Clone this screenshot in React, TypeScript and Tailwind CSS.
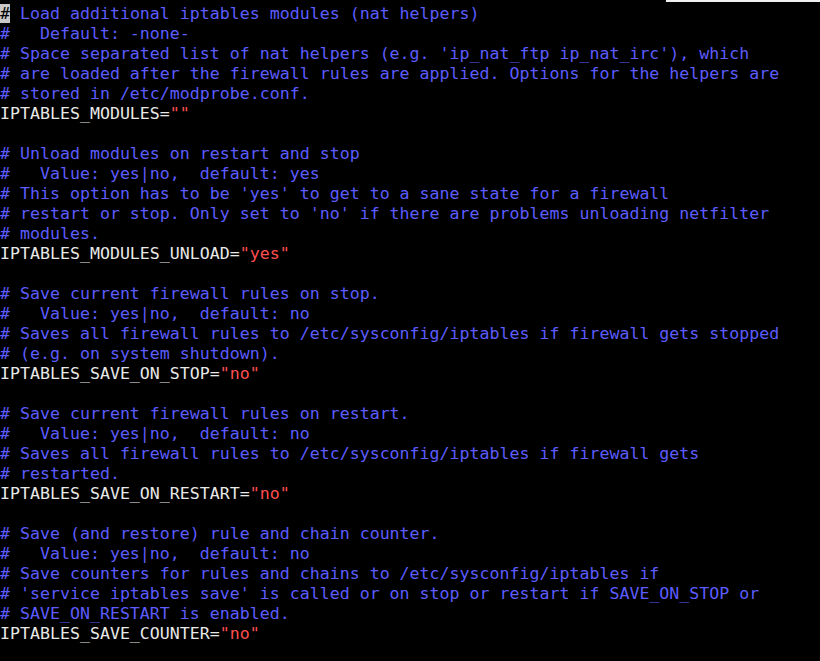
const lines: string[] = [
  "# Load additional iptables modules (nat helpers)",
  "#   Default: -none-",
  "# Space separated list of nat helpers (e.g. 'ip_nat_ftp ip_nat_irc'), which",
  "# are loaded after the firewall rules are applied. Options for the helpers are",
  "# stored in /etc/modprobe.conf.",
  'IPTABLES_MODULES=""',
  "",
  "# Unload modules on restart and stop",
  "#   Value: yes|no,  default: yes",
  "# This option has to be 'yes' to get to a sane state for a firewall",
  "# restart or stop. Only set to 'no' if there are problems unloading netfilter",
  "# modules.",
  'IPTABLES_MODULES_UNLOAD="yes"',
  "",
  "# Save current firewall rules on stop.",
  "#   Value: yes|no,  default: no",
  "# Saves all firewall rules to /etc/sysconfig/iptables if firewall gets stopped",
  "# (e.g. on system shutdown).",
  'IPTABLES_SAVE_ON_STOP="no"',
  "",
  "# Save current firewall rules on restart.",
  "#   Value: yes|no,  default: no",
  "# Saves all firewall rules to /etc/sysconfig/iptables if firewall gets",
  "# restarted.",
  'IPTABLES_SAVE_ON_RESTART="no"',
  "",
  "# Save (and restore) rule and chain counter.",
  "#   Value: yes|no,  default: no",
  "# Save counters for rules and chains to /etc/sysconfig/iptables if",
  "# 'service iptables save' is called or on stop or restart if SAVE_ON_STOP or",
  "# SAVE_ON_RESTART is enabled.",
  'IPTABLES_SAVE_COUNTER="no"',
]

const Line = ({ text, index }: { text: string; index: number }) => {
  if (text === "") return <div className="h-5" />
  if (text.startsWith("#")) {
    if (index === 0) {
      return (
        <div className="h-5 whitespace-pre text-[#5c5cff]">
          <span className="bg-[#c8c8c8] text-black">#</span>
          {text.slice(1)}
        </div>
      )
    }
    return <div className="h-5 whitespace-pre text-[#5c5cff]">{text}</div>
  }
  // NAME="value"
  const eq = text.indexOf("=")
  return (
    <div className="h-5 whitespace-pre text-[#e8e8e8]">
      {text.slice(0, eq + 1)}
      <span className="text-[#ff4f4f]">{text.slice(eq + 1)}</span>
    </div>
  )
}

export default function App() {
  return (
    <div className="relative w-[820px] h-[661px] bg-black overflow-hidden font-['DejaVu_Sans_Mono',monospace] text-[16.6px] leading-5 pt-[4px]">
      {/* top window edge */}
      <div className="absolute top-0 right-0 w-[154px] h-[2px] bg-[#f0f0f0]" />
      {lines.map((l, i) => (
        <Line key={i} text={l} index={i} />
      ))}
    </div>
  )
}
